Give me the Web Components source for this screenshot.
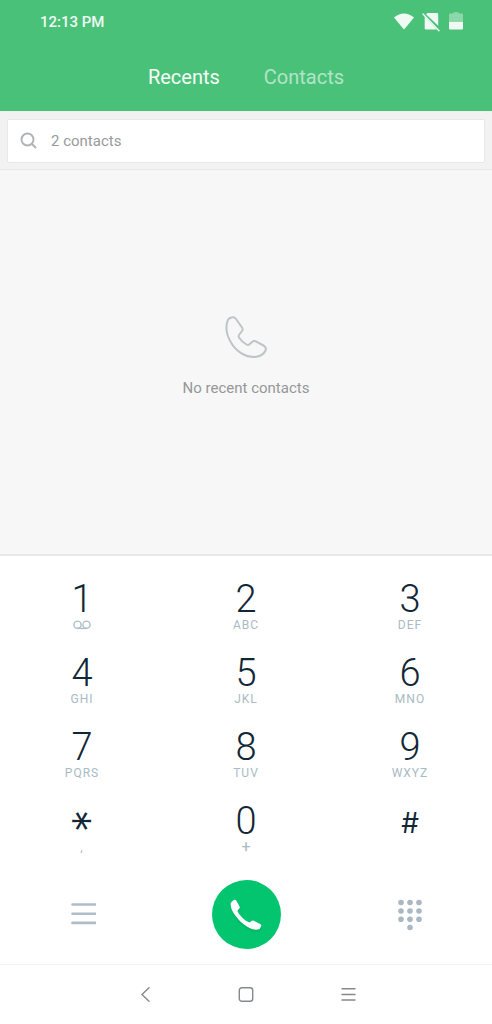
<!DOCTYPE html>
<html lang="en">
<head>
<meta charset="utf-8">
<meta name="viewport" content="width=device-width, initial-scale=1">
<title>Phone</title>
<style>
html, body { margin: 0; }
body { background: #fff; font-family: Roboto, sans-serif; }
</style>
</head>
<body>
<phone-app></phone-app>
<script>
const define = (name, html) => {
  const template = document.createElement('template');
  template.innerHTML = html;
  customElements.define(name, class extends HTMLElement {
    constructor() {
      super();
      this.attachShadow({ mode: 'open' }).append(template.content.cloneNode(true));
    }
  });
};

define('status-bar', `
<style>
:host { display: flex; align-items: center; justify-content: space-between; height: 44px; padding: 0 28px 0 40px; color: #f0faf4; }
time { font-size: 15px; font-weight: 500; line-height: 20px; }
.icons { display: flex; align-items: center; gap: 8px; }
svg { display: block; fill: currentColor; }
</style>
<time>12:13 PM</time>
<div class="icons">
  <svg width="20" height="20" viewBox="0 0 20 20" role="img" aria-label="Wi-Fi"><path d="M0 5.500Q10-2.500 20 5.500L10.700 16.800Q10 17.600 9.300 16.800Z"/></svg>
  <svg width="18" height="20" viewBox="0 0 18 20" role="img" aria-label="No SIM"><path d="M5.500 1h9.500a1.200 1.200 0 0 1 1.200 1.200v11.500L4 2.200ZM2.700 4.500l12 13h-10.800A1.200 1.200 0 0 1 2.700 16.300Z"/><path d="M1 2l16 16.800" stroke="currentColor" stroke-width="1.400" stroke-linecap="round"/></svg>
  <svg width="16" height="20" viewBox="0 0 16 20" role="img" aria-label="Battery"><path opacity=".4" d="M2 1.500h2.500Q5 0 8 0t3.500 1.500H14q1 0 1 1V10H1V2.500q0-1 1-1Z"/><path d="M1 10h14v6.500q0 1-1 1H2q-1 0-1-1Z"/></svg>
</div>`);

define('tab-bar', `
<style>
:host { display: block; }
nav { display: flex; justify-content: center; gap: 44px; height: 67px; }
a { color: #b4e4c8; text-decoration: none; font-size: 20px; line-height: 24px; padding-top: 21px; }
a[aria-current] { color: #f6fdf9; }
</style>
<nav><a href="#recents" aria-current="page">Recents</a><a href="#contacts">Contacts</a></nav>`);

define('search-box', `
<style>
:host { display: block; padding: 7px 7px 6px; background: #f2f2f2; border-top: 1px solid #e8f1ec; border-bottom: 1px solid #e8e8e8; }
label { display: flex; align-items: center; gap: 14px; height: 42px; padding: 0 12px; background: #fff; border: 1px solid #e8e8e8; border-radius: 2px; }
svg { display: block; flex: none; }
input { flex: 1; min-width: 0; border: 0; padding: 0; outline: 0; background: none; font: 15px/20px Roboto, sans-serif; color: #989a9c; }
input::placeholder { color: #989a9c; opacity: 1; }
</style>
<label>
  <svg width="17" height="18" viewBox="0 0 17 18" fill="none" stroke="#afb3b6" stroke-width="1.900" stroke-linecap="round" aria-hidden="true"><circle cx="7.500" cy="7.500" r="6"/><path d="M12 12l3.500 3.500"/></svg>
  <input type="search" aria-label="Search contacts" placeholder="2 contacts">
</label>`);

define('empty-state', `
<style>
:host { display: flex; flex-direction: column; align-items: center; justify-content: center; gap: 19px; padding: 20px 0 32px; background: #f7f7f7; color: #959899; font-size: 15px; line-height: 20px; }
svg { display: block; }
p { margin: 0; }
</style>
<svg width="44" height="44" viewBox="0 0 44 44" fill="none" stroke="#bfc5c7" stroke-width="2" stroke-linejoin="round" aria-hidden="true"><path d="M3.500 6Q4.300 3.200 7.500 2.500Q10.500 1.800 12 4L18 12.500Q19.200 14.300 18 16L15 20Q14.200 21.200 15 22.500C17 25.700 20 28 22.500 29.500Q24.200 30.500 25.500 29.300L28.300 26.800Q29.800 25.500 31.800 26.300L39.500 30.500Q43 32.500 41.500 35.500Q39 41 31 42C22 42.500 12 36.500 7 27.500C2.500 20 1.500 12 3.500 6Z"/></svg>
<p><slot></slot></p>`);

define('dial-key', `
<style>
:host { display: block; }
button { display: block; width: 100%; height: 74px; padding: 8px 0 14px; border: 0; background: none; font-family: inherit; text-align: center; cursor: pointer; }
.digit { display: block; height: 40px; color: #122736; font-size: 38px; font-weight: 300; line-height: 40px; }
.letters { display: flex; justify-content: center; align-items: center; height: 12px; color: #a9bac4; font-size: 12px; font-weight: 400; line-height: 12px; letter-spacing: 1px; }
:host([symbol="hash"]) .digit { font-family: Inter, sans-serif; font-size: 28px; font-weight: 400; line-height: 44px; }
:host([symbol="star"]) .digit { font-family: Inter, sans-serif; font-size: 46px; line-height: 56px; width: 44px; margin: 0 auto; transform: rotate(90deg); }
:host([symbol="plus"]) .letters { font-size: 16px; letter-spacing: 0; }
</style>
<button type="button"><span class="digit"><slot></slot></span><span class="letters"><slot name="letters"></slot></span></button>`);

define('dial-pad', `
<style>
:host { display: grid; grid-template-columns: repeat(3, 1fr); padding-top: 15px; border-top: 2px solid #e8e8e8; background: #fff; }
svg { display: block; }
</style>
<dial-key>1<svg slot="letters" width="18" height="10" viewBox="0 0 18 10" fill="none" stroke="#aebfc9" stroke-width="1.400" role="img" aria-label="Voicemail"><circle cx="4.500" cy="4.700" r="3.600"/><circle cx="13.500" cy="4.700" r="3.600"/><path d="M4.500 8.400h9"/></svg></dial-key>
<dial-key>2<span slot="letters">ABC</span></dial-key>
<dial-key>3<span slot="letters">DEF</span></dial-key>
<dial-key>4<span slot="letters">GHI</span></dial-key>
<dial-key>5<span slot="letters">JKL</span></dial-key>
<dial-key>6<span slot="letters">MNO</span></dial-key>
<dial-key>7<span slot="letters">PQRS</span></dial-key>
<dial-key>8<span slot="letters">TUV</span></dial-key>
<dial-key>9<span slot="letters">WXYZ</span></dial-key>
<dial-key symbol="star">*<span slot="letters">,</span></dial-key>
<dial-key symbol="plus">0<span slot="letters">+</span></dial-key>
<dial-key symbol="hash">#</dial-key>`);

define('call-actions', `
<style>
:host { display: grid; grid-template-columns: repeat(3, 1fr); justify-items: center; align-items: center; padding: 13px 0 15px; }
button { display: grid; place-items: center; width: 48px; height: 48px; padding: 0; border: 0; background: none; cursor: pointer; }
.call { width: 69px; height: 69px; border-radius: 50%; background: #04c56f; }
svg { display: block; }
.call svg { filter: drop-shadow(0 2px 1px #02b463); }
</style>
<button type="button" aria-label="Menu"><svg width="28" height="24" viewBox="0 0 28 24" stroke="#aebdc8" stroke-width="2.600" stroke-linecap="round"><path d="M4.500 1.500h23M4.500 10.700h23M4.500 19.900h23"/></svg></button>
<button type="button" class="call" aria-label="Call"><svg width="32" height="32" viewBox="0 0 32 32" fill="#fff"><path d="M.8 4Q1.800 1.500 4.500.7Q5.600.400 6.200 1.500L9.600 7.500Q10.100 8.500 9.300 9.400L7.800 11.200Q7.300 12 7.900 13C10.500 17.500 15 21.800 19 23.300Q19.700 23.500 20.400 22.900L21.800 21.800Q22.800 21.200 23.800 21.700L30.500 25.300Q31.600 26 31.100 27.200Q30.300 30 28 30.600C22 31.500 14.500 27 8.500 20.500C3 14.300 0 9 .8 4Z"/></svg></button>
<button type="button" aria-label="Hide keypad"><svg width="26" height="32" viewBox="0 0 26 32" fill="#a9b8c3"><circle cx="4" cy="3.500" r="2.800"/><circle cx="13" cy="3.500" r="2.800"/><circle cx="22" cy="3.500" r="2.800"/><circle cx="4" cy="12" r="2.800"/><circle cx="13" cy="12" r="2.800"/><circle cx="22" cy="12" r="2.800"/><circle cx="4" cy="20.300" r="2.800"/><circle cx="13" cy="20.300" r="2.800"/><circle cx="22" cy="20.300" r="2.800"/><circle cx="13" cy="28.500" r="2.800"/></svg></button>`);

define('system-nav', `
<style>
:host { display: block; border-top: 1px solid #f4f4f4; }
nav { display: flex; justify-content: center; align-items: center; gap: 70px; height: 59px; }
button { display: grid; place-items: center; width: 32px; height: 32px; padding: 0; border: 0; background: none; cursor: pointer; }
svg { display: block; fill: none; stroke: #85898d; stroke-width: 1.400; stroke-linecap: round; }
</style>
<nav>
<button type="button" aria-label="Back"><svg width="16" height="16" viewBox="0 0 16 16"><path d="M13 .800L6 7.500l7 6.700"/></svg></button>
<button type="button" aria-label="Home"><svg width="16" height="16" viewBox="0 0 16 16"><rect x="1.300" y=".800" width="13.400" height="13.400" rx="2.500"/></svg></button>
<button type="button" aria-label="Recent apps"><svg width="16" height="16" viewBox="0 0 16 16"><path d="M2 1.800h13M2 7.500h13M2 13h13"/></svg></button>
</nav>`);

define('phone-app', `
<style>
:host { display: flex; flex-direction: column; min-height: 100vh; }
header { background: #4ac178; }
empty-state { flex: 1; }
</style>
<header><status-bar></status-bar><tab-bar></tab-bar></header>
<search-box></search-box>
<empty-state>No recent contacts</empty-state>
<dial-pad></dial-pad>
<call-actions></call-actions>
<system-nav></system-nav>`);
</script>
</body>
</html>
